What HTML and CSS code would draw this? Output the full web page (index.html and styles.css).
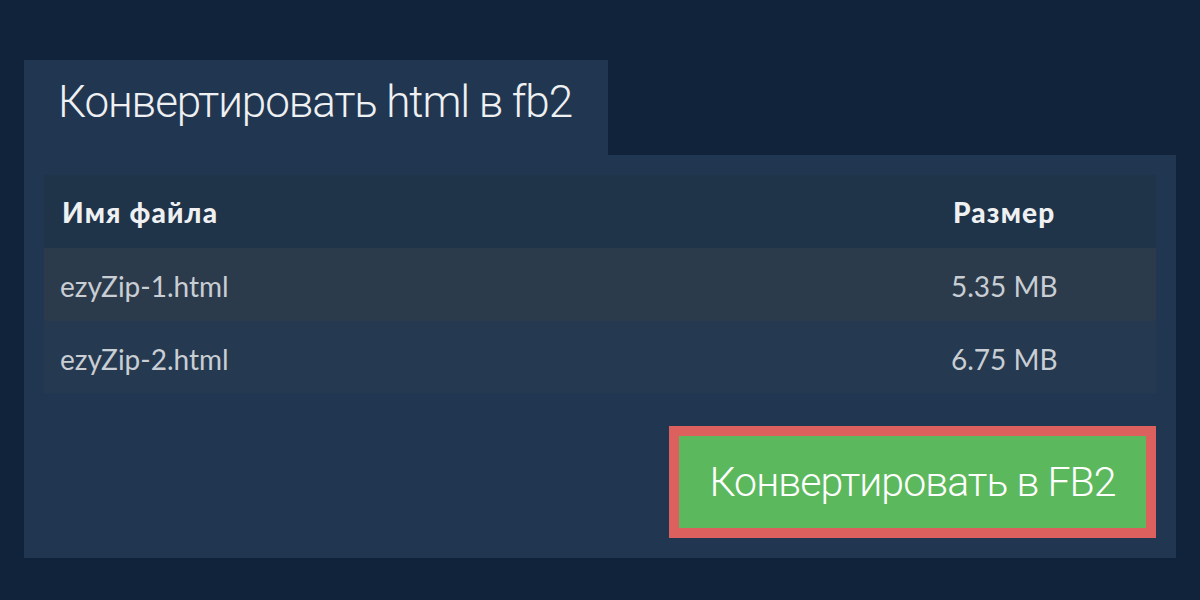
FILE: index.html
```html
<!DOCTYPE html>
<html lang="ru">
<head>
<meta charset="utf-8">
<title>Конвертировать html в fb2</title>
<link rel="stylesheet" href="styles.css">
</head>
<body>
<div class="page">
  <div class="tab"><h1 class="tab-title">Конвертировать html в fb2</h1></div>
  <div class="panel">
    <div class="table">
      <div class="row head"><div class="c-name">Имя файла</div><div class="c-size">Размер</div></div>
      <div class="row odd"><div class="c-name">ezyZip-1.html</div><div class="c-size">5.35 MB</div></div>
      <div class="row even"><div class="c-name">ezyZip-2.html</div><div class="c-size">6.75 MB</div></div>
    </div>
    <div class="actions">
      <button class="convert">Конвертировать в FB2</button>
    </div>
  </div>
</div>
</body>
</html>
```
FILE: styles.css
```css
html, body {
  margin: 0;
  padding: 0;
  background: #10233a;
  height: 100%;
}
.page {
  padding: 60px 24px 0 24px;
}
.tab {
  box-sizing: border-box;
  width: 584px;
  height: 95px;
  background: #213650;
  padding: 16px 0 0 34px;
}
.tab-title {
  margin: 0;
  font-family: Roboto, "Noto Sans", sans-serif;
  font-weight: 300;
  font-size: 44px;
  line-height: normal;
  color: #eef0f2;
  letter-spacing: -1.1px;
}
.panel {
  background: #213650;
  padding: 20px;
}
.table {
  display: flex;
  flex-direction: column;
  font-family: Lato, "Open Sans", sans-serif;
  font-size: 28px;
}
.row {
  display: flex;
  align-items: center;
  height: 73px;
  padding: 0 18px 0 16px;
}
.row.head {
  background: #1f3349;
  font-weight: 900;
  color: #eef0f2;
  padding-left: 18px;
  letter-spacing: 1.2px;
}
.row.odd {
  background: #2c3b4c;
  color: #c9ced4;
  padding-top: 3px;
  box-sizing: border-box;
}
.row.even {
  height: 72px;
  background: #253950;
  color: #c9ced4;
  padding-top: 3px;
  box-sizing: border-box;
}
.c-name {
  flex: 1;
}
.c-size {
  width: 187px;
}
.row.head .c-size {
  width: 185px;
}
.actions {
  display: flex;
  justify-content: flex-end;
  margin-top: 33px;
}
.convert {
  height: 112px;
  width: 487px;
  background: #5cb85c;
  border: 10px solid #dc605d;
  color: #ffffff;
  font-family: Roboto, "Noto Sans", sans-serif;
  font-weight: 300;
  font-size: 41px;
  letter-spacing: -0.95px;
  padding: 0;
  cursor: pointer;
}
```
